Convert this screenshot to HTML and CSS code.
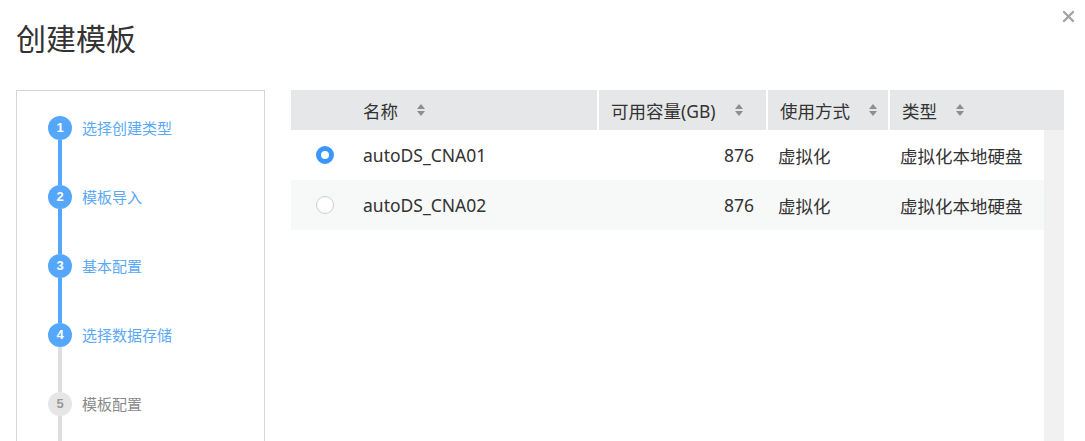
FILE: index.html
```html
<!DOCTYPE html>
<html lang="zh-CN">
<head>
<meta charset="utf-8">
<title>创建模板</title>
<link rel="stylesheet" href="styles.css">
</head>
<body>
<div class="dialog">
  <div class="head">
    <h1 class="title">创建模板</h1>
    <svg class="close" viewBox="0 0 13 13" width="13" height="13"><path d="M2 2 L11 11 M11 2 L2 11" stroke="#a3a3a3" stroke-width="2.4" stroke-linecap="round"/></svg>
  </div>
  <div class="main">
    <div class="panel">
      <div class="steps">
        <div class="step"><div class="rail"><span class="dot">1</span><span class="line"></span></div><span class="label">选择创建类型</span></div>
        <div class="step"><div class="rail"><span class="dot">2</span><span class="line"></span></div><span class="label">模板导入</span></div>
        <div class="step"><div class="rail"><span class="dot">3</span><span class="line"></span></div><span class="label">基本配置</span></div>
        <div class="step"><div class="rail"><span class="dot">4</span><span class="line off"></span></div><span class="label">选择数据存储</span></div>
        <div class="step todo"><div class="rail"><span class="dot">5</span><span class="line off"></span></div><span class="label">模板配置</span></div>
      </div>
    </div>
    <div class="table">
      <div class="thead">
        <div class="th first"></div>
        <div class="th">名称<svg class="sort" viewBox="0 0 8 12" width="8" height="12"><path d="M0 5 L4 0 L8 5 Z M0 7 L4 12 L8 7 Z" fill="#8e8e8e"/></svg></div>
        <div class="th sep">可用容量(GB)<svg class="sort" viewBox="0 0 8 12" width="8" height="12"><path d="M0 5 L4 0 L8 5 Z M0 7 L4 12 L8 7 Z" fill="#8e8e8e"/></svg></div>
        <div class="th sep">使用方式<svg class="sort" viewBox="0 0 8 12" width="8" height="12"><path d="M0 5 L4 0 L8 5 Z M0 7 L4 12 L8 7 Z" fill="#8e8e8e"/></svg></div>
        <div class="th sep">类型<svg class="sort" viewBox="0 0 8 12" width="8" height="12"><path d="M0 5 L4 0 L8 5 Z M0 7 L4 12 L8 7 Z" fill="#8e8e8e"/></svg></div>
      </div>
      <div class="tbody">
        <div class="rows">
          <div class="tr">
            <div class="td radio-cell"><span class="radio checked"></span></div>
            <div class="td name">autoDS_CNA01</div>
            <div class="td num">876</div>
            <div class="td">虚拟化</div>
            <div class="td">虚拟化本地硬盘</div>
          </div>
          <div class="tr alt">
            <div class="td radio-cell"><span class="radio"></span></div>
            <div class="td name">autoDS_CNA02</div>
            <div class="td num">876</div>
            <div class="td">虚拟化</div>
            <div class="td">虚拟化本地硬盘</div>
          </div>
        </div>
        <div class="scroll"></div>
      </div>
    </div>
  </div>
</div>
</body>
</html>
```

FILE: styles.css
```css
html, body {
  margin: 0;
  padding: 0;
  background: #fff;
}
body {
  width: 1085px;
  height: 441px;
  overflow: hidden;
  font-family: "Noto Sans", "Noto Sans CJK SC", sans-serif;
  color: #333;
}
.dialog {
  padding-left: 16px;
}
.head {
  display: flex;
  justify-content: space-between;
  align-items: flex-start;
  height: 90px;
  padding-right: 10px;
}
.title {
  margin: 19px 0 0;
  font-size: 30px;
  line-height: 36px;
  font-weight: 400;
  color: #333;
  font-family: "Noto Sans CJK SC", sans-serif;
}
.close {
  margin-top: 10px;
}
.main {
  display: flex;
  gap: 26px;
}
.panel {
  width: 247px;
  height: 400px;
  border: 1px solid #d6d6d6;
  flex: none;
}
.steps {
  padding: 25px 0 0 31px;
  display: flex;
  flex-direction: column;
}
.step {
  display: flex;
  align-items: flex-start;
}
.rail {
  display: flex;
  flex-direction: column;
  align-items: center;
  width: 24px;
}
.dot {
  width: 24px;
  height: 24px;
  border-radius: 50%;
  background: #55a7fc;
  color: #fff;
  font-family: "Liberation Sans", sans-serif;
  font-weight: 700;
  font-size: 13px;
  line-height: 24px;
  text-align: center;
}
.line {
  width: 4px;
  height: 45px;
  background: #55a7fc;
}
.line.off {
  background: #dedede;
}
.label {
  margin-left: 10px;
  font-family: "Noto Sans CJK SC", sans-serif;
  font-size: 15px;
  line-height: 24px;
  color: #5aa8f6;
}
.todo .dot {
  background: #e6e6e6;
  color: #9a9a9a;
}
.todo .label {
  color: #8a8a8a;
}
.table {
  width: 773px;
  flex: none;
  display: flex;
  flex-direction: column;
}
.thead {
  display: grid;
  grid-template-columns: 60px 246px 169px 122px 176px;
  height: 40px;
  background: #e6e7e8;
}
.th {
  display: flex;
  align-items: center;
  padding-left: 12px;
  font-size: 17.5px;
  color: #333;
}
.th.first {
  padding-left: 0;
}
.th.sep {
  border-left: 2px solid #fff;
}
.sort {
  margin-left: 19px;
}
.tbody {
  display: flex;
  height: 320px;
}
.rows {
  width: 753px;
}
.scroll {
  width: 20px;
  background: #f1f1f1;
}
.tr {
  display: grid;
  grid-template-columns: 60px 246px 169px 122px 156px;
  height: 50px;
  align-items: center;
  font-size: 17.5px;
  color: #333;
}
.tr.alt {
  background: #f7f8f8;
}
.td {
  padding-left: 12px;
}
.td.radio-cell {
  padding-left: 25px;
  display: flex;
  align-items: center;
}
.td.num {
  padding-left: 0;
  padding-right: 12px;
  text-align: right;
}
.radio {
  display: block;
  width: 18px;
  height: 18px;
  box-sizing: border-box;
  border-radius: 50%;
  border: 1px solid #cfcfcf;
  background: #fff;
}
.radio.checked {
  border: 5px solid #3a97fb;
}
```
